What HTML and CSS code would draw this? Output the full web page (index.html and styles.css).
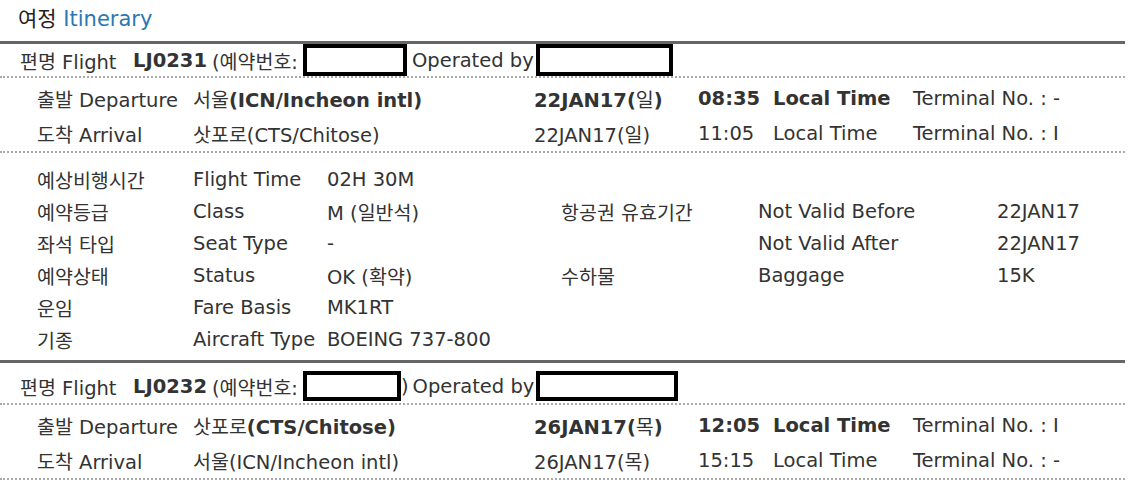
FILE: index.html
```html
<!DOCTYPE html>
<html lang="ko">
<head>
  <meta charset="UTF-8">
  <meta name="viewport" content="width=device-width, initial-scale=1.0">
  <title>여정 Itinerary</title>
  <link rel="stylesheet" href="styles.css">
</head>
<body>
  <div class="itinerary">
    <h2 class="title">여정 <span class="title-en">Itinerary</span></h2>

    <section class="flight">
      <div class="flight-head">
        <span class="head-label">편명 Flight</span>
        <b class="flight-no">LJ0231</b>
        <span>(예약번호:</span><span class="mask mask-ref"></span>
        <span class="op">Operated by</span><span class="mask mask-op"></span>
      </div>
      <div class="route">
        <div class="leg leg-main">
          <span>출발 Departure</span>
          <span><span class="ko">서울</span>(ICN/Incheon intl)</span>
          <span>22JAN17(<span class="ko">일</span>)</span>
          <span>08:35</span>
          <span>Local Time</span>
          <span class="terminal">Terminal No. : -</span>
        </div>
        <div class="leg">
          <span>도착 Arrival</span>
          <span>삿포로(CTS/Chitose)</span>
          <span>22JAN17(일)</span>
          <span>11:05</span>
          <span>Local Time</span>
          <span class="terminal">Terminal No. : I</span>
        </div>
      </div>
      <div class="details">
        <span>예상비행시간</span><span>Flight Time</span><span>02H 30M</span><span></span><span></span><span></span>
        <span>예약등급</span><span>Class</span><span>M (일반석)</span><span>항공권 유효기간</span><span>Not Valid Before</span><span>22JAN17</span>
        <span>좌석 타입</span><span>Seat Type</span><span>-</span><span></span><span>Not Valid After</span><span>22JAN17</span>
        <span>예약상태</span><span>Status</span><span>OK (확약)</span><span>수하물</span><span>Baggage</span><span>15K</span>
        <span>운임</span><span>Fare Basis</span><span>MK1RT</span><span></span><span></span><span></span>
        <span>기종</span><span>Aircraft Type</span><span>BOEING 737-800</span><span></span><span></span><span></span>
      </div>
    </section>

    <section class="flight">
      <div class="flight-head">
        <span class="head-label">편명 Flight</span>
        <b class="flight-no">LJ0232</b>
        <span>(예약번호:</span><span class="mask mask-ref mask-ref-short"></span><span class="close">)</span>
        <span class="op">Operated by</span><span class="mask mask-op mask-op-long"></span>
      </div>
      <div class="route">
        <div class="leg leg-main">
          <span>출발 Departure</span>
          <span><span class="ko">삿포로</span>(CTS/Chitose)</span>
          <span>26JAN17(<span class="ko">목</span>)</span>
          <span>12:05</span>
          <span>Local Time</span>
          <span class="terminal">Terminal No. : I</span>
        </div>
        <div class="leg">
          <span>도착 Arrival</span>
          <span>서울(ICN/Incheon intl)</span>
          <span>26JAN17(목)</span>
          <span>15:15</span>
          <span>Local Time</span>
          <span class="terminal">Terminal No. : -</span>
        </div>
      </div>
    </section>
  </div>
</body>
</html>
```

FILE: styles.css
```css
body {
  margin: 0;
  padding: 0;
  background-color: #fff;
  font-family: "DejaVu Sans", "Noto Sans CJK KR", sans-serif;
  font-size: 19.5px;
  color: #333;
}
.itinerary {
  width: 1125px;
}
.title {
  margin: 0;
  height: 41px;
  padding-left: 18px;
  font-size: 21px;
  font-weight: normal;
  line-height: 38px;
  color: #222;
}
.title-en {
  color: #2a78b2;
}
.flight {
  border-top: 3px solid #666;
}
.flight-head {
  display: flex;
  align-items: center;
  height: 32px;
  padding-left: 20px;
  border-bottom: 2px dotted #aaa;
}
.flight + .flight .flight-head {
  height: 30px;
  padding-top: 8px;
  padding-bottom: 2px;
}
.head-label {
  width: 113px;
}
.flight-no {
  margin-right: 5px;
}
.mask {
  box-sizing: border-box;
  height: 32px;
  border: 4px solid #000;
  background: #fff;
}
.mask-ref {
  width: 104px;
  margin-left: 5px;
  margin-right: 5px;
}
.mask-ref-short {
  width: 98px;
  margin-right: 0;
}
.close {
  margin-right: 4px;
}
.mask-op {
  width: 137px;
  margin-left: 2px;
}
.mask-op-long {
  width: 142px;
}
.flight + .flight .mask {
  height: 30px;
}
.route {
  padding-top: 3px;
  border-bottom: 2px dotted #aaa;
}
.leg {
  display: grid;
  grid-template-columns: 156px 341px 164px 75px 140px 1fr;
  align-items: center;
  height: 35px;
  padding-left: 37px;
}
.leg-main {
  font-weight: bold;
}
.leg-main > span:first-child,
.leg-main .terminal,
.ko {
  font-weight: normal;
}
.details {
  display: grid;
  grid-template-columns: 156px 134px 234px 197px 239px 1fr;
  grid-auto-rows: 32px;
  align-items: center;
  padding: 10px 0 5px 37px;
}
```
